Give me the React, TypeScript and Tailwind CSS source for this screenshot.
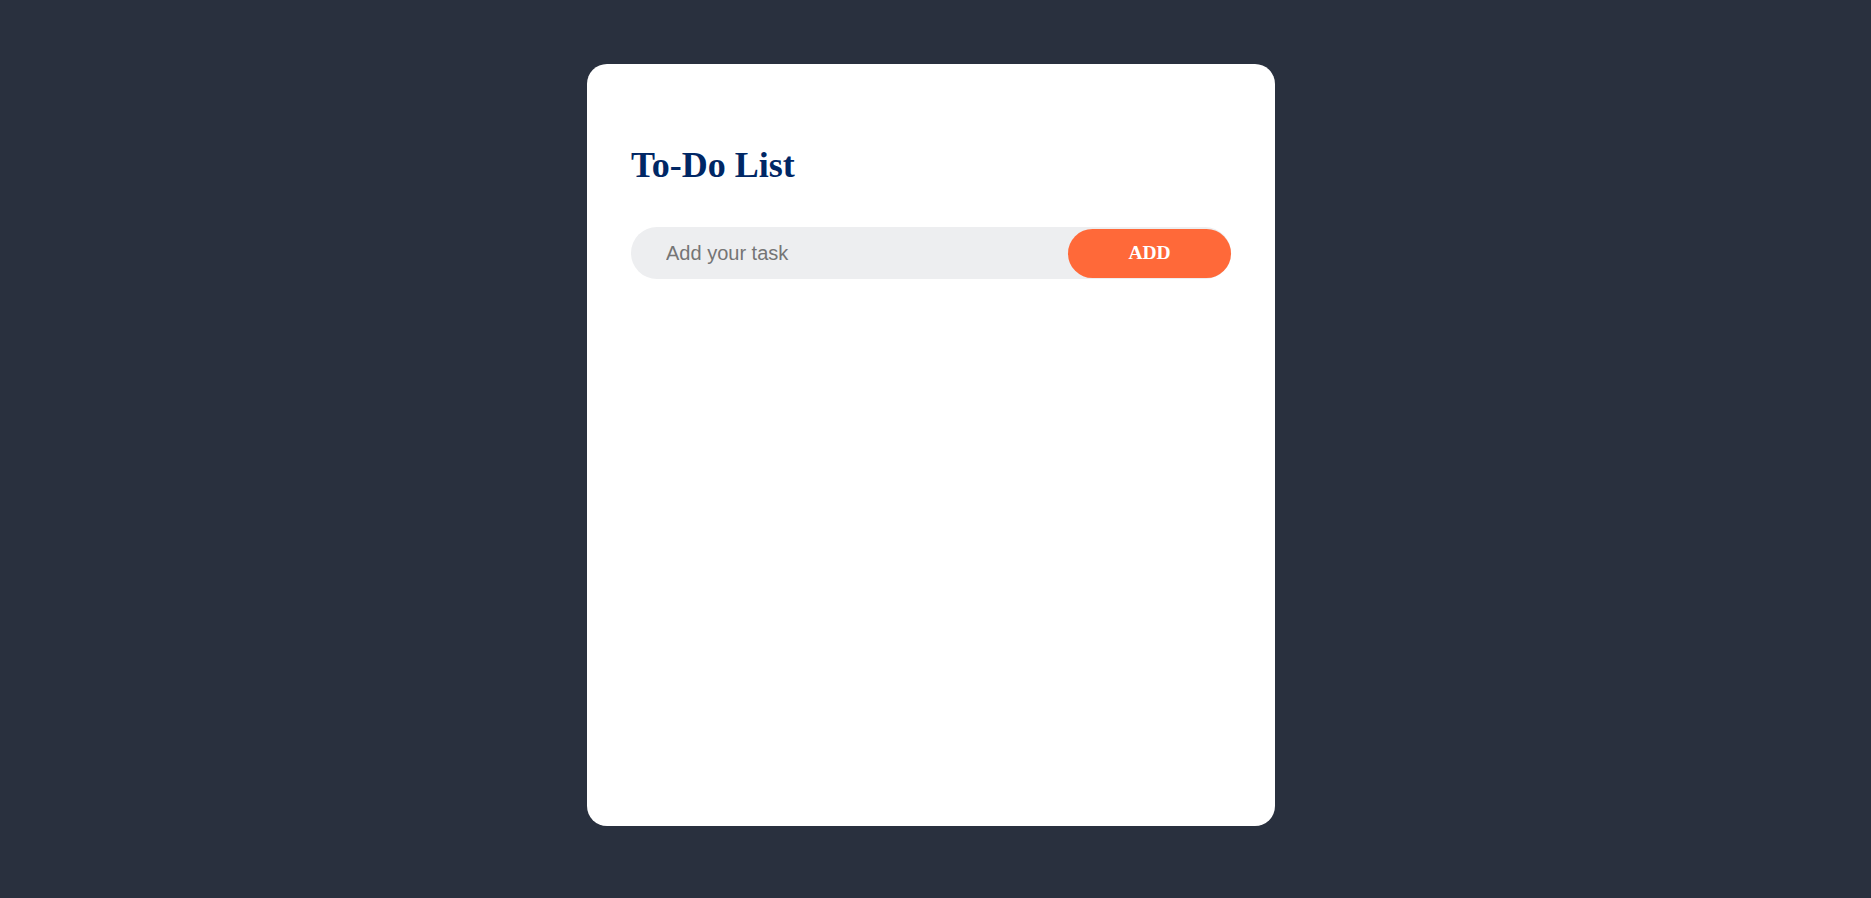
import React from "react";

export default function App() {
  return (
    <div className="min-h-[898px] w-full bg-[#29303e] flex justify-center pr-[9px] pt-[64px]" style={{ fontFamily: '"Liberation Serif", "Times New Roman", serif' }}>
      <div className="w-[688px] h-[762px] bg-white rounded-[20px] px-[44px] pt-[82px]">
        <h2 className="text-[36px] leading-[38px] font-bold text-[#002765]">To-Do List</h2>
        <div className="mt-[43px] h-[52px] w-[600px] rounded-full bg-[#edeef0] flex items-center pl-[35px]">
          <input
            type="text"
            placeholder="Add your task"
            className="flex-1 min-w-0 bg-transparent outline-none border-none text-[20px] text-[#333] placeholder:text-[#757575]"
            style={{ fontFamily: '"Liberation Sans", Arial, sans-serif' }}
          />
          <button className="h-[49px] w-[163px] rounded-full bg-[#ff6939] text-white font-bold text-[19.5px] leading-none">
            ADD
          </button>
        </div>
      </div>
    </div>
  );
}
